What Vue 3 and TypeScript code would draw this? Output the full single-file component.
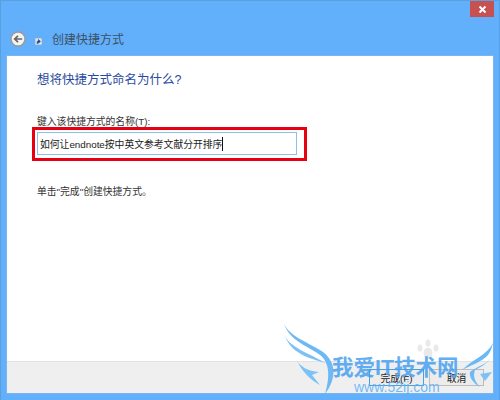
<script setup lang="ts">
const title = '创建快捷方式'
const heading = '想将快捷方式命名为什么?'
const fieldLabel = '键入该快捷方式的名称(T):'
const fieldValue = '如何让endnote按中英文参考文献分开排序'
const hint = '单击"完成"创建快捷方式。'
</script>

<template>
  <div class="window">
    <div class="titlebar">
      <button class="close" aria-label="关闭">
        <svg width="9" height="9" viewBox="0 0 9 9">
          <path d="M1.5 1.5l6 6M7.5 1.5l-6 6" stroke="#fff" stroke-width="2" fill="none" />
        </svg>
      </button>
    </div>
    <div class="navbar">
      <span class="back">
        <svg width="16" height="16" viewBox="0 0 16 16">
          <circle cx="8" cy="8" r="7" fill="#f4f4f4" stroke="#9a9a9a" stroke-width="1.4" />
          <path d="M12.2 8H5M8 4.8L4.7 8 8 11.2" stroke="#666" stroke-width="1.7" fill="none" />
        </svg>
      </span>
      <span class="shortcut-icon">
        <svg width="7" height="7" viewBox="0 0 7 7">
          <rect x="0" y="0" width="7" height="7" fill="#dfe6ee" />
          <rect x="0" y="0" width="7" height="7" fill="none" stroke="#8a97a6" stroke-width="0.6" />
          <path d="M2.2 6V3.4h1.6M3.4 1.6L5.4 3.4 3.4 5.2z" fill="#1f4a8a" stroke="#1f4a8a" stroke-width="0.7" />
        </svg>
      </span>
      <span class="title">{{ title }}</span>
    </div>
    <div class="panel">
      <div class="content">
        <h1 class="heading">{{ heading }}</h1>
        <label class="label">{{ fieldLabel }}</label>
        <div class="input">{{ fieldValue }}<i class="caret"></i></div>
        <p class="hint">{{ hint }}</p>
      </div>
      <div class="footer">
        <button class="btn primary">完成(F)</button>
        <button class="btn">取消</button>
      </div>
    </div>

    <!-- red marker drawn over the screenshot -->
    <div class="marker"></div>

    <!-- site watermark -->
    <div class="watermark">
      <svg class="wings" width="230" height="85" viewBox="0 0 230 85">
        <g fill="#e9e9e9">
          <ellipse cx="158" cy="38" rx="4.5" ry="5.5" />
          <ellipse cx="150" cy="33" rx="2.5" ry="3.5" />
          <ellipse cx="158" cy="28" rx="2.5" ry="3.5" />
          <ellipse cx="166" cy="33" rx="2.5" ry="3.5" />
        </g>
        <path d="M14 9C20 22 40 28 53 37 65 46 68 62 55 79 60 62 60 48 50 40 38 31 20 26 14 9Z" fill="#6cb9f5" />
        <path d="M15 21C20 32 38 38 56 48 42 44 22 40 15 21Z" fill="#7cc2f7" />
        <path d="M27 46C31 52 38 56 49 57L42 60 50 70C42 66 33 58 27 46Z" fill="#7cc2f7" />
        <path d="M223 28C217 40 203 44 192 55 199 51 212 47 218 40 221 36 222 32 223 28Z" fill="#6cb9f5" />
        <path d="M222 40C217 50 210 52 205 55 203 60 204 66 210 72 203 68 199 62 200 57 207 51 218 50 222 40Z" fill="#6cb9f5" />
        <path d="M210 59L222 57 215 66Z" fill="#7cc2f7" />
      </svg>
      <span class="wm-name">我爱IT技术网</span>
      <span class="wm-url">www.52ij.com</span>
    </div>
  </div>
</template>

<style>
html, body {
  margin: 0;
  background: #62b0fc;
}
</style>

<style scoped>
.window {
  position: relative;
  width: 500px;
  height: 400px;
  box-sizing: border-box;
  padding: 0 6px 7px 6px;
  display: flex;
  flex-direction: column;
  overflow: hidden;
  background: #62b0fc;
  border-top: 1px solid #5a9fe0;
  border-left: 1px solid #5a9fe0;
  border-right: 1px solid #5a9fe0;
  font-family: "Liberation Sans", "Noto Sans CJK SC", sans-serif;
}
.titlebar {
  height: 16px;
  display: flex;
  justify-content: flex-end;
  flex: none;
}
.close {
  width: 24px;
  height: 16px;
  margin-right: -1px;
  padding: 0;
  border: 0;
  background: #c75050;
  display: flex;
  align-items: center;
  justify-content: center;
}
.navbar {
  height: 39px;
  box-sizing: border-box;
  padding-top: 5px;
  flex: none;
  display: flex;
  align-items: center;
}
.back {
  display: flex;
  margin-left: 3px;
}
.shortcut-icon {
  display: flex;
  margin-left: 9px;
  margin-top: 4px;
}
.title {
  margin-left: 10px;
  margin-top: -2px;
  font-size: 12px;
  color: #3d4f60;
}
.panel {
  flex: 1;
  display: flex;
  flex-direction: column;
  background: #fff;
  box-shadow: 0 0 0 1px #7ab5ee;
}
.content {
  flex: 1;
  padding: 15px 0 0 30px;
}
.heading {
  margin: 0;
  font-size: 12.5px;
  font-weight: 400;
  line-height: 18px;
  color: #2a4a9e;
}
.label {
  display: block;
  margin-top: 26px;
  font-size: 9.8px;
  line-height: 14px;
  color: #333;
}
.input {
  box-sizing: border-box;
  width: 260px;
  height: 23px;
  margin-top: 3px;
  padding-left: 2px;
  border: 1px solid #8fbfe8;
  font-size: 9.8px;
  color: #222;
  display: flex;
  align-items: center;
}
.caret {
  width: 1px;
  height: 14px;
  background: #111;
}
.hint {
  margin: 30px 0 0;
  font-size: 9.8px;
  line-height: 14px;
  color: #333;
}
.footer {
  height: 32px;
  box-sizing: border-box;
  flex: none;
  display: flex;
  justify-content: flex-end;
  align-items: center;
  gap: 5px;
  padding-right: 9px;
  background: #efefef;
  border-top: 1px solid #e2e2e2;
}
.btn {
  width: 55px;
  height: 17px;
  padding: 0;
  font-family: inherit;
  font-size: 9.8px;
  color: #222;
  background: #ececec;
  border: 1px solid #bdbdbd;
}
.btn.primary {
  border-color: #4a9fe0;
}
.marker {
  position: absolute;
  left: 31px;
  top: 126px;
  width: 275px;
  height: 34px;
  border: 3px solid #e60012;
  box-sizing: border-box;
}
.watermark {
  position: absolute;
  left: 269px;
  top: 314px;
  width: 230px;
  height: 85px;
}
.wings {
  position: absolute;
  left: 0;
  top: 0;
}
.wm-name {
  position: absolute;
  left: 62px;
  top: 40px;
  font-size: 21.5px;
  font-weight: 700;
  line-height: 26px;
  white-space: nowrap;
  color: rgba(70, 160, 240, 0.85);
}
.wm-url {
  position: absolute;
  left: 84px;
  top: 64px;
  font-size: 14px;
  line-height: 16px;
  white-space: nowrap;
  color: rgba(90, 175, 245, 0.85);
}
</style>
